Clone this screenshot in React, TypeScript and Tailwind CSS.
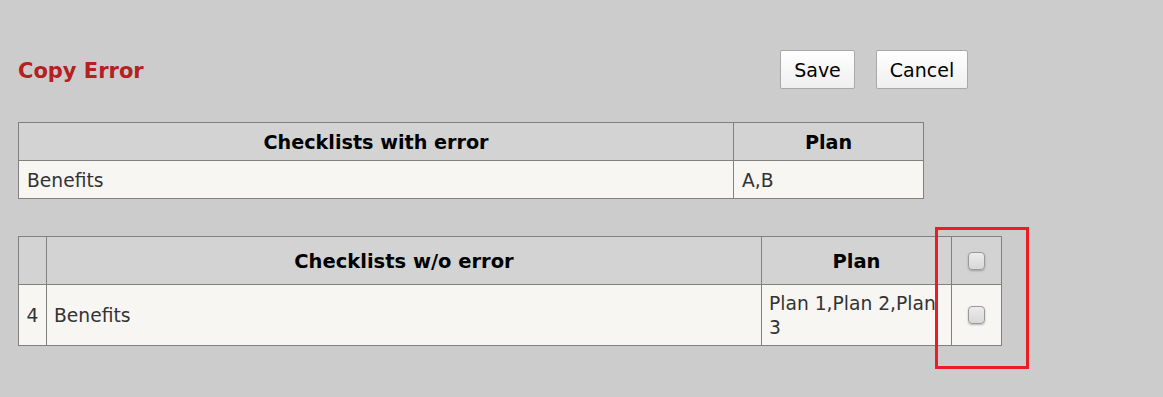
const ERROR_ROWS = [{ name: "Benefits", plan: "A,B" }];
const OK_ROWS = [{ id: 4, name: "Benefits", plan: "Plan 1,Plan 2,Plan 3" }];

function Checkbox() {
  return (
    <span className="inline-block w-[17px] h-[18px] rounded-[4px] border border-[#9a9a9a] bg-gradient-to-b from-[#ececec] to-[#d8d8d8] shadow-[0_1px_2px_rgba(0,0,0,0.25)]" />
  );
}

function Button({ label, width }: { label: string; width: string }) {
  return (
    <button
      className={`${width} h-[39px] pt-[2px] border border-[#a9a9a9] rounded-[2px] bg-gradient-to-b from-white to-[#efefef] text-[19px] text-black`}
    >
      {label}
    </button>
  );
}

export default function App() {
  return (
    <div className="w-[1163px] h-[397px] bg-[#cccccc] font-['DejaVu_Sans',Verdana,sans-serif] text-[#333] relative overflow-hidden">
      <div className="flex items-center pt-[50px] pl-[18px]">
        <h1 className="w-[762px] pt-[4px] text-[21px] font-bold text-[#b22222]">Copy Error</h1>
        <div className="flex gap-[21px]">
          <Button label="Save" width="w-[75px]" />
          <Button label="Cancel" width="w-[92px]" />
        </div>
      </div>

      <table className="ml-[18px] mt-[33px] w-[906px] border-collapse text-[18.7px]">
        <thead>
          <tr className="h-[38px] bg-[#d3d3d3]">
            <th className="w-[715px] pt-[3px] border border-[#808080] font-bold text-black text-[19.2px]">Checklists with error</th>
            <th className="pt-[3px] border border-[#808080] font-bold text-black text-[19.2px]">Plan</th>
          </tr>
        </thead>
        <tbody>
          {ERROR_ROWS.map((row) => (
            <tr key={row.name} className="h-[38px] bg-[#f7f6f3]">
              <td className="pt-[3px] border border-[#808080] pl-[8px]">{row.name}</td>
              <td className="pt-[3px] border border-[#808080] pl-[8px]">{row.plan}</td>
            </tr>
          ))}
        </tbody>
      </table>

      <table className="ml-[18px] mt-[37px] w-[984px] border-collapse text-[18.7px] table-fixed">
        <thead>
          <tr className="h-[48px] bg-[#d3d3d3]">
            <th className="w-[28px] border border-[#808080]"></th>
            <th className="w-[715px] pt-[2px] border border-[#808080] font-bold text-black text-[19.5px]">Checklists w/o error</th>
            <th className="w-[190px] pt-[2px] border border-[#808080] font-bold text-black text-[19.5px]">Plan</th>
            <th className="border border-[#808080] text-center">
              <div className="flex justify-center pt-[1px]">
                <Checkbox />
              </div>
            </th>
          </tr>
        </thead>
        <tbody>
          {OK_ROWS.map((row) => (
            <tr key={row.id} className="h-[61px] bg-[#f7f6f3]">
              <td className="pt-[2px] border border-[#808080] text-center">{row.id}</td>
              <td className="pt-[2px] border border-[#808080] pl-[7px]">{row.name}</td>
              <td className="pt-[1px] border border-[#808080] pl-[7px] leading-[24px] break-words">{row.plan}</td>
              <td className="border border-[#808080]">
                <div className="flex justify-center">
                  <Checkbox />
                </div>
              </td>
            </tr>
          ))}
        </tbody>
      </table>

      <div className="absolute left-[935px] top-[227px] w-[94px] h-[142px] border-[3px] border-[#ec1c24] pointer-events-none" />
    </div>
  );
}
